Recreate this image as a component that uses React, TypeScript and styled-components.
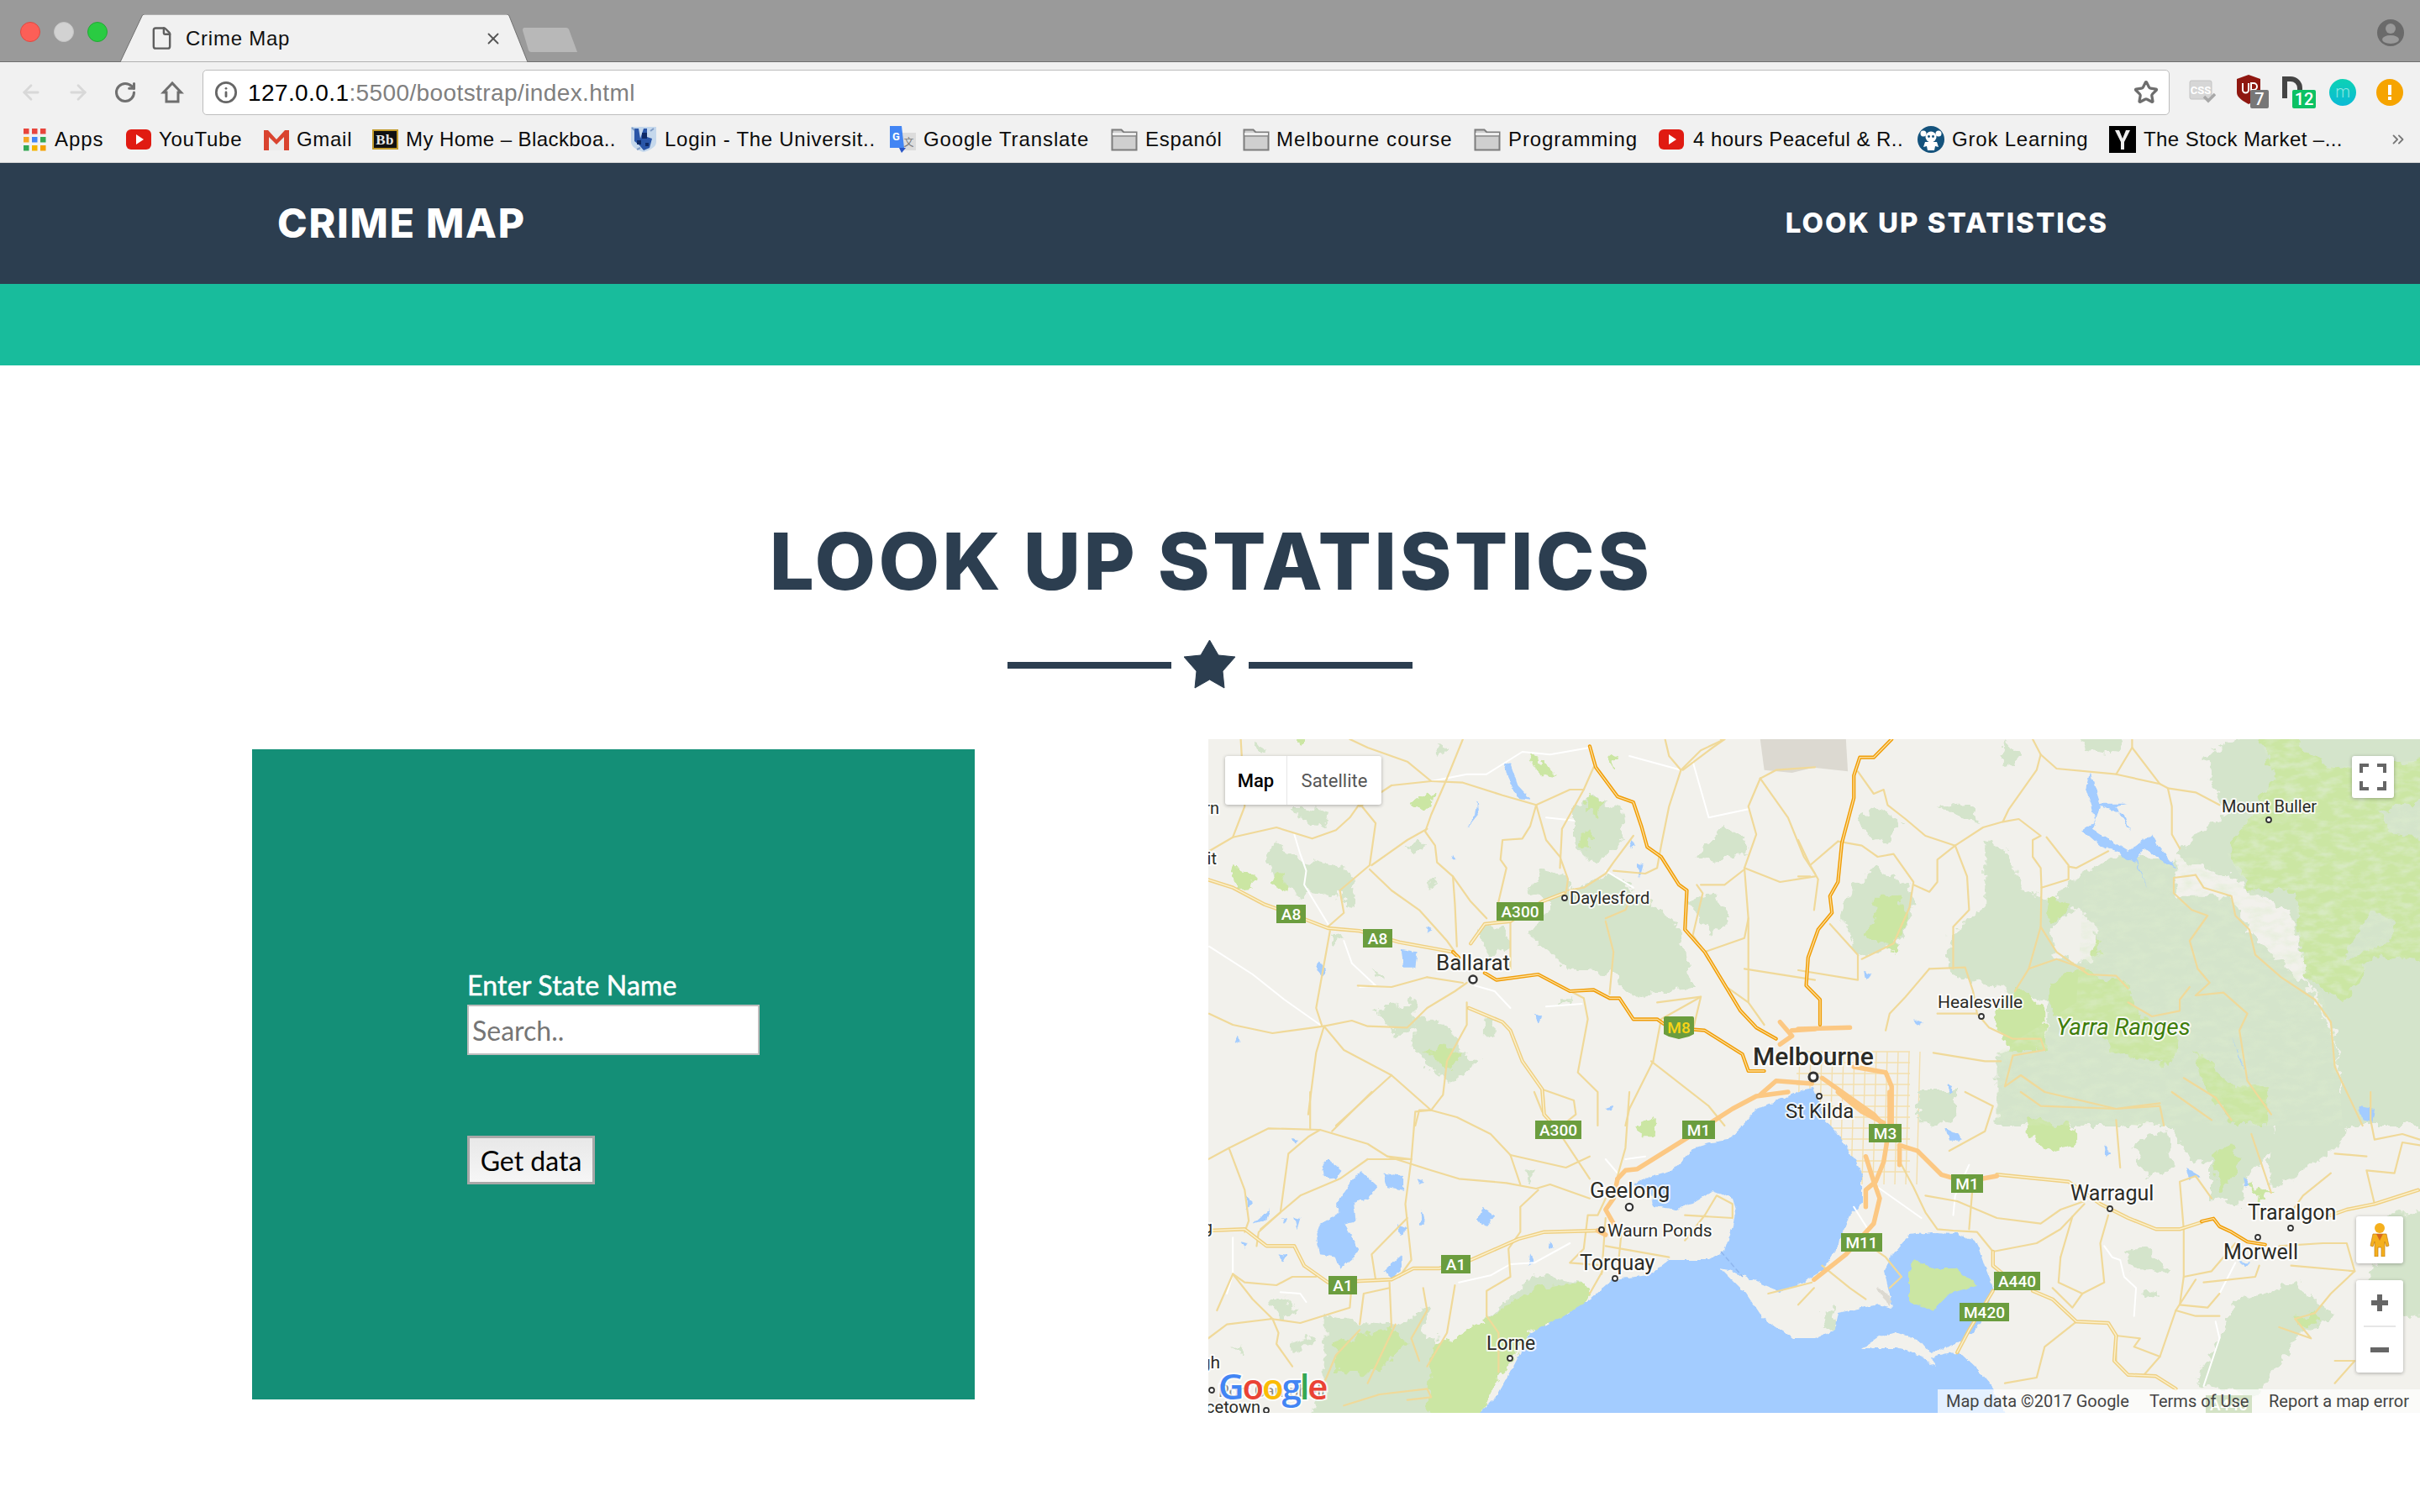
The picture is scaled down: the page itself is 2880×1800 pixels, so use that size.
import React from 'react';
import styled, { createGlobalStyle } from 'styled-components';
import { ArrowLeft, ArrowRight, RotateCw, Info, Star, File, X, ChevronsRight } from 'lucide-react';

const Global = createGlobalStyle`
  html, body { margin: 0; padding: 0; background: #fff; overflow: hidden; }
  #root { width: 2880px; height: 1800px; }
  * { box-sizing: border-box; }
`;

const Page = styled.div`width: 2880px; height: 1800px; display: flex; flex-direction: column; font-family: "Liberation Sans", Arial, sans-serif;`;

/* ---------- browser chrome ---------- */
const TabStrip = styled.div`height: 74px; background: #9a9a9a; border-bottom: 1px solid #6e6e6e; display: flex; padding-left: 24px; flex-shrink: 0;`;
const Light = styled.span<{ $c: string; $b: string }>`width: 24px; height: 24px; border-radius: 50%; background: ${p => p.$c}; border: 1px solid ${p => p.$b}; margin: 26px 16px 0 0; flex-shrink: 0;`;
const Tab = styled.div`position: relative; width: 485px; height: 57px; margin: 17px 0 -1px -1px; display: flex; align-items: center; padding: 0 30px 0 35px; flex-shrink: 0;`;
const TabShape = styled.svg`position: absolute; inset: 0;`;
const TabIcon = styled(File)`position: relative; color: #5f5f5f; flex-shrink: 0;`;
const TabTitle = styled.span`position: relative; font-size: 24px; letter-spacing: .75px; color: #111; margin-left: 14px; flex: 1;`;
const TabClose = styled(X)`position: relative; color: #555;`;
const NewTab = styled.svg`margin: 33px 0 0 -6px; flex-shrink: 0;`;
const Avatar = styled.svg`margin: 23px 18px 0 auto;`;

const Toolbar = styled.div`height: 66px; background: #f1f1f1; display: flex; align-items: flex-start; padding: 9px 0 0 23px; flex-shrink: 0;`;
const NavIcons = styled.div`display: flex; gap: 28px; height: 54px; align-items: center; flex-shrink: 0;`;
const Omnibox = styled.div`width: 2341px; height: 54px; margin-left: 22px; background: #fff; border: 1.5px solid #bdbdbd; border-radius: 5px; display: flex; align-items: center; padding: 0 12px 0 13px; flex-shrink: 0;`;
const Url = styled.div`flex: 1; margin: 2px 0 0 12px; font-size: 28px; letter-spacing: .4px; color: #000;`;
const UrlRest = styled.span`color: #808080;`;
const Extensions = styled.div`display: flex; margin-left: 23px; height: 54px; align-items: center;`;
const ExtSlot = styled.div<{ $w: number }>`width: ${p => p.$w}px; flex-shrink: 0; display: flex;`;

const BookmarkBar = styled.div`height: 54px; background: #f1f1f1; border-bottom: 1px solid #d4d4d4; display: flex; align-items: center; padding: 0 0 2px 27px; flex-shrink: 0;`;
const Bookmark = styled.div<{ $w: number; $ls: number }>`width: ${p => p.$w}px; display: flex; align-items: center; flex-shrink: 0; font-size: 24px; letter-spacing: ${p => p.$ls}px; color: #0b0b0b; white-space: nowrap;`;
const BookmarkIcon = styled.span<{ $w?: number }>`width: ${p => p.$w ?? 40}px; display: flex; flex-shrink: 0;`;
const More = styled(ChevronsRight)`color: #777; margin-left: -2px;`;

const Apps = () => (
  <svg width="28" height="28" viewBox="0 0 28 28">
    {[['#e8453c', '#e8453c', '#e8453c'], ['#f5a623', '#4285f4', '#34a853'], ['#34a853', '#f4b400', '#f4a000']].map((r, y) => r.map((c, x) => <rect key={`${x}${y}`} x={x * 10 + 1} y={y * 10 + 1} width="6.5" height="6.5" fill={c} />))}
  </svg>
);
const Yt = () => (
  <svg width="30" height="28" viewBox="0 0 30 28"><rect y="2" width="30" height="24" rx="6" fill="#e01b12" /><path d="M12 8l9 6-9 6z" fill="#fff" /></svg>
);
const Gmail = () => (
  <svg width="30" height="28" viewBox="0 0 30 28"><path d="M2 3h26v24H2z" fill="#ececec" /><path d="M2 3l13 12L28 3v5L15 19 2 8z" fill="#d0d0d0" /><path d="M0 3h5l10 11L25 3h5v24h-6V11l-9 9-9-9v16H0z" fill="#d9432f" /></svg>
);
const Bb = () => (
  <svg width="31" height="28" viewBox="0 0 31 28"><rect x="1" y="3" width="29" height="22" fill="#111" stroke="#c29b2b" strokeWidth="2" /><text x="15" y="20" fontSize="17" fontFamily="Liberation Serif" fontWeight="700" textAnchor="middle" fill="#e8e8e8">Bb</text></svg>
);
const Crest = () => (
  <svg width="32" height="32" viewBox="0 0 32 32">
    <path d="M1 1h30v18c0 6-8 10-15 12C9 29 1 25 1 19z" fill="#c5d8ec" />
    <path d="M5 3h5l2 12 4-12h4v10l6 2-3 11-7 3-5-6-6-5z" fill="#2a56a8" />
    <path d="M14 8h6v7h-6zM8 17h5v5H8zM18 20h4v4h-4z" fill="#0e2a66" />
    <path d="M2 2l3 3M28 3l-4 3M8 28l4-2" stroke="#7f9cc6" strokeWidth="2" />
  </svg>
);
const Translate = () => (
  <svg width="31" height="32" viewBox="0 0 31 32"><path d="M14 8h17v21H14z" fill="#dcdcdc" /><path d="M0 0h14l3 26H0z" fill="#4285f4" /><path d="M11 26h8l-5 6z" fill="#2a56c6" /><text x="8" y="17" fontSize="13" fontWeight="700" fontFamily="Roboto" textAnchor="middle" fill="#fff">G</text><text x="23" y="24" fontSize="12" fontFamily="Noto Sans CJK SC" textAnchor="middle" fill="#777">文</text></svg>
);
const Folder = () => (
  <svg width="32" height="28" viewBox="0 0 32 28"><path d="M1.5 5V2.5h11l3 3h15v21h-29z" fill="#cfcfcf" stroke="#7d7d7d" strokeWidth="2" /><path d="M2 7.5h28" stroke="#f5f5f5" strokeWidth="2.5" /><path d="M2 10h28" stroke="#8c8c8c" strokeWidth="1.5" /></svg>
);
const Grok = () => (
  <svg width="32" height="32" viewBox="0 0 32 32"><circle cx="16" cy="16" r="16" fill="#14527c" /><circle cx="16" cy="13" r="6.5" fill="#fff" /><circle cx="7" cy="9" r="3.5" fill="#fff" /><circle cx="25" cy="9" r="3.5" fill="#fff" /><path d="M9 19h14l2 6-4-1-1 5h-8l-1-5-4 1z" fill="#fff" /><circle cx="13.5" cy="12.5" r="1.4" fill="#14527c" /><circle cx="18.5" cy="12.5" r="1.4" fill="#14527c" /></svg>
);
const YIcon = () => (
  <svg width="32" height="32" viewBox="0 0 32 32"><rect width="32" height="32" fill="#000" /><path d="M7 5h5l4 10 4-10h5l-7 14v9h-4v-9z" fill="#eee" /></svg>
);
const Home = () => (
  <svg width="28" height="28" viewBox="0 0 28 28" fill="none"><path d="M14 3L3.5 14H7v11h14V14h3.5z" stroke="#6e6e6e" strokeWidth="3" strokeLinejoin="miter" /></svg>
);

const bookmarks: { label: string; w: number; ls: number; icon: React.ReactNode; iw?: number }[] = [
  { label: 'Apps', w: 123, ls: .9, icon: <Apps />, iw: 38 },
  { label: 'YouTube', w: 164, ls: .7, icon: <Yt />, iw: 39 },
  { label: 'Gmail', w: 129, ls: .7, icon: <Gmail />, iw: 39 },
  { label: 'My Home – Blackboa..', w: 307, ls: .42, icon: <Bb /> },
  { label: 'Login - The Universit..', w: 309, ls: .72, icon: <Crest />, iw: 41 },
  { label: 'Google Translate', w: 263, ls: .9, icon: <Translate /> },
  { label: 'Espanól', w: 157, ls: .7, icon: <Folder />, iw: 41 },
  { label: 'Melbourne course', w: 275, ls: 1.1, icon: <Folder /> },
  { label: 'Programming', w: 220, ls: .9, icon: <Folder />, iw: 41 },
  { label: '4 hours Peaceful & R..', w: 308, ls: .45, icon: <Yt />, iw: 41 },
  { label: 'Grok Learning', w: 228, ls: .8, icon: <Grok />, iw: 41 },
  { label: 'The Stock Market –...', w: 335, ls: .42, icon: <YIcon />, iw: 41 },
];

/* ---------- site ---------- */
const Navbar = styled.nav`height: 144px; background: #2c3e50; display: flex; align-items: center; justify-content: space-between; padding: 0 371px 2px 330px; flex-shrink: 0;`;
const Brand = styled.a`font-family: Inter, sans-serif; font-weight: 800; font-size: 48px; letter-spacing: 1.8px; color: #fff;`;
const NavLink = styled.a`font-family: Inter, sans-serif; font-weight: 800; font-size: 33px; letter-spacing: 2px; color: #fff;`;
const Band = styled.div`height: 97px; background: #18bc9c; flex-shrink: 0;`;
const Section = styled.section`flex: 1; display: flex; flex-direction: column; align-items: stretch;`;
const Heading = styled.h2`margin: 195px 0 0; height: 76px; line-height: 76px; font-family: Inter, sans-serif; font-weight: 800; font-size: 94px; letter-spacing: 3.25px; color: #2c3e50; text-align: center; white-space: nowrap; padding-left: 2px;`;
const Divider = styled.div`display: flex; align-items: center; justify-content: center; gap: 15px; margin-top: 55px; height: 62px;`;
const DividerLine = styled.span`width: 195px; height: 8px; background: #2c3e50;`;
const Columns = styled.div`display: flex; align-items: flex-start; padding-left: 300px; margin-top: 57px;`;
const Panel = styled.div`width: 860px; height: 774px; margin-top: 12px; background: #148f77; display: flex; flex-direction: column; align-items: flex-start; padding: 258px 0 0 256px; font-family: Lato, sans-serif;`;
const Label = styled.label`height: 46px; line-height: 46px; font-size: 32px; color: #fff; letter-spacing: .2px; -webkit-text-stroke: .5px #fff;`;
const SearchInput = styled.input`width: 348px; height: 60px; background: #fff; border: 2px solid #bdbdbd; padding: 0 4px; font-family: Lato, sans-serif; font-size: 32px; outline: none; &::placeholder { color: #757575; opacity: 1; }`;
const GetData = styled.button`width: 152px; height: 58px; margin-top: 96px; border: 3px solid #a8a8a8; background: linear-gradient(#e8e8e8, #f6f6f6); font-family: Lato, sans-serif; font-size: 32px; color: #000; padding: 0;`;

/* ---------- map ---------- */
const MapBox = styled.div`position: relative; width: 1442px; height: 802px; margin-left: 278px; overflow: hidden; background: #f2f1ec; font-family: Roboto, sans-serif;`;
const MapDrawing = styled.svg`display: block;`;
const MapText = styled.text<{ $s: number; $w?: number; $c?: string; $i?: boolean }>`
  font-family: Roboto, sans-serif; font-size: ${p => p.$s}px; font-weight: ${p => p.$w ?? 400}; fill: ${p => p.$c ?? '#2b2b26'};
  font-style: ${p => (p.$i ? 'italic' : 'normal')}; stroke: rgba(255,255,255,.82); stroke-width: 4px; paint-order: stroke; stroke-linejoin: round;
`;
const ShieldText = styled.text<{ $c?: string }>`font-family: Roboto, sans-serif; font-size: 19px; font-weight: 500; fill: ${p => p.$c ?? '#fff'}; text-anchor: middle;`;
const GoogleMark = styled.text`font-family: "Open Sans", sans-serif; font-size: 42px; font-weight: 600; stroke: rgba(255,255,255,.75); stroke-width: 4px; paint-order: stroke; letter-spacing: -2.1px;`;

const MapType = styled.div`position: absolute; left: 20px; top: 20px; width: 186px; height: 58px; background: #fff; border-radius: 3px; box-shadow: 0 1px 4px rgba(0,0,0,.3); display: flex; align-items: center;`;
const TypeBtn = styled.div<{ $on?: boolean; $w: number }>`width: ${p => p.$w}px; height: 100%; display: flex; align-items: center; justify-content: center; font-size: 22px; font-weight: ${p => (p.$on ? 500 : 400)}; color: ${p => (p.$on ? '#000' : '#565656')}; & + & { border-left: 1px solid #e6e6e6; }`;
const MapButton = styled.div<{ $t: number; $l: number; $w: number; $h: number }>`position: absolute; top: ${p => p.$t}px; left: ${p => p.$l}px; width: ${p => p.$w}px; height: ${p => p.$h}px; background: #fff; border-radius: 3px; box-shadow: 0 1px 4px rgba(0,0,0,.3); display: flex; flex-direction: column; align-items: center; justify-content: center;`;
const ZoomCell = styled.div`flex: 1; width: 100%; display: flex; align-items: center; justify-content: center;`;
const ZoomRule = styled.div`width: 38px; height: 2px; background: #e6e6e6;`;
const Attribution = styled.div`position: absolute; right: 0; bottom: 0; width: 574px; height: 28px; background: rgba(255,255,255,.7); display: flex; align-items: center; padding-left: 10px; font-size: 20px; color: #444; white-space: nowrap;`;
const AttrItem = styled.span<{ $w: number }>`width: ${p => p.$w}px;`;

const T: Record<string, number[]> = { A: [2.119, -18, 3, -20], B: [2.114, 702, 3, -20], C: [2.119, -18, 3, 420], D: [2.114, 702, 3, 420] };
const P = (r: string, s: string) => {
  const [sx, ox, sy, oy] = T[r];
  return s.split(' ').map(a => { const [x, y] = a.split(',').map(Number); return `${(x / sx + ox).toFixed(1)},${(y / sy + oy).toFixed(1)}`; }).join(' ');
};

const forest: [string, string][] = [
  ['B', '1020,120 1150,30 1620,30 1620,1440 1380,1440 1350,1100 1270,900 1250,700 1100,560 950,480 1000,400 1080,330 1040,200'],
  ['B', '720,540 800,470 950,490 950,620 1090,620 1140,760 1280,940 1350,1130 1370,1440 500,1440 500,1180 620,1130 630,1000 380,900 380,760 470,660 470,420 540,480 560,600 640,640 680,580'],
  ['B', '140,580 200,520 290,600 280,700 250,800 160,840 110,690'],
  ['B', '150,340 200,305 260,360 220,430 170,400'],
  ['B', '520,60 560,130 510,150'], ['B', '700,30 820,30 800,110 730,100'], ['B', '350,300 430,290 460,360 400,330'], ['B', '390,760 470,740 520,880 400,880'],
  ['A', '180,470 210,430 270,490 400,520 400,590 350,620 300,600 280,630 210,560'],
  ['A', '850,600 880,520 945,550 945,610 1050,540 1220,720 1240,800 1255,950 1100,980 1060,900 950,880 880,800 850,760 900,650'],
  ['A', '1180,900 1230,810 1260,950 1180,960'],
  ['A', '460,1030 560,990 560,1090 510,1120'], ['A', '560,1050 640,1080 680,1180 720,1210 650,1290 590,1230 560,1150'],
  ['A', '960,310 1000,260 1080,310 1090,420 1010,510 960,430'], ['A', '1270,480 1340,360 1400,440 1390,470 1300,500'],
  ['A', '240,300 280,300 350,320 340,360 300,370'], ['A', '1250,640 1310,610 1360,700 1310,760'], ['A', '710,740 780,720 800,800 750,830'],
  ['A', '540,450 560,410 585,440 550,465'], ['A', '375,600 410,590 405,660 385,650'], ['A', '595,560 610,555 605,595 592,595'], ['A', '150,80 180,90 170,120'],
  ['A', '445,890 480,900 480,920'], ['A', '350,750 380,770 350,790'], ['A', '915,985 960,985 925,1010'], ['A', '735,1060 760,1070 760,1120 735,1120'], ['A', '610,75 640,90 620,120'],
  ['C', '740,810 860,650 970,680 980,770 880,780 820,850'],
  ['C', '330,800 400,820 520,830 590,770 580,880 620,870 600,1190 290,1190 330,1030'],
  ['C', '190,750 230,740 265,780 220,815'], ['C', '240,900 300,870 310,880 250,930'], ['C', '100,910 130,915 125,945'], ['C', '835,270 865,285 850,320'],
  ['D', '500,50 600,0 1140,0 1180,60 1200,200 1130,300 1120,400 1040,380 1040,250 990,250 940,120 900,0'],
  ['D', '1230,0 1410,0 1430,50 1350,200 1250,300 1190,340 1180,180'],
  ['D', '1000,1040 1060,880 1100,750 1250,680 1350,800 1260,870 1200,1000 1150,1080'],
  ['D', '820,570 880,560 930,640 840,640'], ['D', '1430,680 1500,430 1620,430 1620,800 1430,800'], ['D', '840,200 920,130 940,270 880,300'],
  ['D', '860,720 900,710 900,740'], ['D', '300,0 400,0 400,90 330,130 300,90'], ['D', '60,780 90,770 100,840 70,850'], ['D', '280,510 305,500 300,540'],
];
const park: [string, string][] = [
  ['B', '1155,30 1250,30 1270,100 1350,160 1620,130 1620,860 1450,830 1370,1000 1270,900 1250,600 1130,590 1080,470 1150,300 1200,200'],
  ['B', '625,625 680,640 670,690 630,720'],
  ['B', '630,930 720,880 770,920 800,905 830,950 860,1040 960,1130 940,1230 780,1170 770,1100 640,1040'],
  ['B', '490,1040 550,930 620,1040 620,1170 530,1170'],
  ['B', '1000,1170 1100,1300 1180,1300 1180,1440 1100,1440 1010,1280'],
  ['B', '200,620 260,620 270,720 240,815 170,770'], ['B', '700,790 745,740 760,830 720,830'],
  ['A', '100,520 150,535 145,600 105,605'], ['A', '590,1180 630,1150 680,1180 650,1240'], ['A', '970,420 1000,370 1000,470'], ['A', '990,260 1030,280 1020,330 990,320'],
  ['A', '550,280 605,250 600,305 575,305'], ['A', '190,560 225,530 235,610'], ['A', '250,40 300,40 270,90'], ['A', '845,120 880,130 915,195 880,190'], ['A', '1045,110 1070,120 1060,180'],
  ['C', '590,1190 600,920 720,830 860,700 980,680 1010,730 950,800 850,860 780,1000 710,1190'],
  ['C', '360,900 500,840 540,900 460,1000 360,1000'], ['C', '1115,120 1165,98 1165,160 1130,160'],
  ['D', '575,90 700,130 700,190 640,210 580,160'], ['D', '1040,230 1080,180 1120,240 1060,360'], ['D', '1240,810 1300,795 1310,825 1280,840'], ['D', '1130,330 1190,360 1160,400'],
];
const lakes: [string, string][] = [
  ['C', '320,470 370,430 360,400 420,280 465,340 440,380 405,395 410,460 380,470 420,570 370,630 360,590 320,580 310,510'],
  ['C', '325,260 340,240 375,280 360,310 330,300'], ['C', '480,290 530,300 530,350 490,340'], ['C', '730,410 760,440 740,480 715,460'],
  ['C', '480,640 525,580 525,640 500,665'], ['C', '150,470 195,415 185,455'], ['C', '565,310 585,320 570,330'], ['C', '575,420 585,470 572,470'],
  ['C', '515,475 540,490 520,510'], ['C', '850,580 860,610 845,620'], ['C', '900,530 910,560 895,555'], ['C', '135,370 150,390 135,420'], ['C', '255,445 270,450 262,490'], ['C', '215,580 235,585 225,610'], ['C', '120,535 138,540 130,560'],
  ['C', '225,450 238,455 230,470'], ['C', '250,165 265,170 255,185'], ['C', '1040,60 1060,50 1050,70'],
  ['A', '525,810 565,820 560,875 530,875'], ['A', '785,140 800,150 820,230 850,275 820,270 790,180'], ['A', '715,280 720,330 690,380 710,330'], ['A', '590,730 605,740 590,755'],
  ['A', '315,850 335,880 325,905 310,880'], ['A', '110,1125 122,1135 105,1145'], ['A', '655,470 662,490 652,490'], ['A', '860,1040 878,1050 870,1075'], ['A', '1105,420 1115,440 1098,450'], ['A', '1120,500 1135,510 1125,560'],
  ['B', '735,180 760,290 830,290 800,300 835,390 820,330 760,300 740,380 830,460 890,400 910,450 950,520 910,490 870,450 850,490 880,600 850,500 820,490 810,465 760,440 715,385 750,350 725,240'],
  ['B', '1090,1120 1140,1300 1110,1200'], ['B', '1410,1380 1445,1390 1445,1430 1420,1420'], ['B', '165,890 185,900 170,925'], ['B', '290,1060 315,1070 300,1085'], ['B', '375,1290 390,1300 380,1330'],
  ['D', '370,130 400,150 410,170 380,170'], ['D', '770,190 785,220 775,230'], ['D', '975,270 1010,300 985,315'], ['D', '1120,300 1135,330 1125,340'], ['D', '1410,50 1450,60 1445,105 1420,100'], ['D', '1110,610 1135,610 1125,625'],
];
const minor: [string, string][] = [
  ['A', '395,60 440,90 540,140 600,210 680,215 780,260 865,295 950,240 985,240 1010,160'], ['A', '680,60 640,200 600,330 585,390 610,440 615,500 655,550 700,640 740,700'],
  ['A', '655,550 660,650 665,800'], ['A', '500,225 600,210'], ['A', '420,300 500,225'], ['A', '120,60 130,300 100,410 40,460'],
  ['A', '100,410 210,375 300,415 360,385 395,340 420,290 460,360 445,510 370,600 380,680 340,730'], ['A', '445,525 500,600 570,670 640,780 660,820'], ['A', '590,380 540,420 450,510'],
  ['A', '865,295 850,370 830,415 780,420 775,490 790,520 770,640'], ['A', '865,295 890,420 925,480 945,560 940,610'], ['A', '985,240 930,380 925,520'], ['A', '1110,405 1060,500 1040,540 985,590 945,600'],
  ['A', '1190,60 1200,120 1230,170 1280,100 1340,60'], ['A', '1230,170 1200,300 1180,440 1170,520 1140,540 1060,530'], ['A', '1430,200 1400,300 1420,400 1390,520 1400,700 1400,1000'],
  ['A', '1430,200 1500,340 1540,480 1568,540'], ['A', '1390,520 1480,570 1568,550'], ['A', '1280,580 1340,580 1390,525'], ['A', '1170,1000 1280,980 1260,1100'],
  ['A', '40,1040 100,1080 200,1110 330,1085 400,1065 440,1085 540,1090 590,1020 660,960 690,930'], ['A', '330,1085 380,1170 500,1260 600,1385 570,1385 560,1440'], ['A', '500,1260 360,1440'],
  ['A', '330,1085 310,1180 290,1400'], ['A', '345,745 310,1020 325,1085'], ['A', '590,910 500,945 415,940'], ['A', '590,910 680,930'], ['A', '690,1000 690,1080 640,1210 630,1330 600,1385'],
  ['A', '880,1310 960,1350 965,1400 930,1440'], ['A', '800,710 800,880'], ['A', '870,900 985,985 995,1060 970,1250 1020,1320 1020,1440'], ['A', '1040,710 1060,820 1050,970'], ['A', '1040,700 1090,670 1100,640'],
  ['A', '1160,1210 1180,1060 1280,980'], ['A', '1155,1210 1300,1370 1340,1440'], ['A', '1160,1210 1100,1380 1090,1440'], ['A', '1290,820 1390,770 1400,700'], ['A', '1270,580 1285,610 1260,760 1290,820'],
  ['A', '1330,60 1340,60 1310,90 1235,170'], ['A', '1430,200 1470,170 1568,160'], ['A', '1440,1080 1400,1000 1350,950'], ['A', '1390,880 1568,920'],
  ['B', '590,60 610,115 650,165 800,185 910,220 840,90'], ['B', '840,60 840,90 800,185'], ['B', '910,220 930,235 1000,250 1060,295'], ['B', '930,235 940,300 940,400 960,450'],
  ['B', '610,115 600,170 530,310 515,355 465,375 395,440 320,405 270,345 225,295 215,240 190,255 150,175'], ['B', '395,440 425,550 430,670 390,730 390,880'], ['B', '395,440 350,490 350,570 330,605 290,580'],
  ['B', '515,355 555,345 610,405 590,420 590,480 610,520 612,590 680,560 680,510 625,410'], ['B', '680,515 700,520 780,460'], ['B', '612,590 610,730 650,820 730,900 800,905 830,950'],
  ['B', '100,425 160,440 200,480 240,470 290,570 280,660 240,790 160,845'], ['B', '100,425 30,510 50,560 40,670'], ['B', '30,510 0,420'], ['B', '0,550 30,550'],
  ['B', '1000,545 945,555 945,610 990,670 1030,690 985,780 1005,880 1035,930 1000,975 1070,965 1130,1040 1110,1100 1130,1280 1190,1400'], ['B', '985,945 960,990 960,1030 890,1050 830,1000'],
  ['B', '1000,545 1020,590 1090,620 1100,690 1135,740 1150,830 1215,910 1300,990 1340,1070 1350,1230 1380,1320 1420,1440'], ['B', '580,880 650,845 720,880'], ['B', '610,730 580,880 545,960'],
  ['B', '330,880 420,875 440,960 450,1040'], ['B', '330,880 270,980 230,1040 220,1100'], ['B', '350,1040 450,1040 480,1090 540,1130 610,1130 620,1170 540,1190 520,1300 560,1260 620,1320 800,1380 910,1370 920,1440'],
  ['B', '970,1270 1050,1340 1090,1420'], ['B', '340,1180 470,1210 510,1210'], ['B', '80,720 150,830 150,920 0,885'],
  ['C', '38,240 90,200 190,130 320,135 440,185 490,230 600,280 670,310 790,325 865,345 900,330 1000,380'], ['C', '490,230 550,240 535,400 550,600 520,660'], ['C', '320,135 290,160 240,220 220,430 165,500 160,550'],
  ['C', '350,140 450,0'], ['C', '295,0 295,130'], ['C', '90,200 130,350 140,460 130,500'], ['C', '550,240 560,70 600,65 665,90 750,150 800,225 825,330'], ['C', '800,225 940,270 1000,230'],
  ['C', '870,350 825,410 825,500 795,560 800,660 740,710 740,800 770,860 770,1000'], ['C', '540,450 450,580 460,670'], ['C', '440,240 500,240 550,240'], ['C', '440,240 370,310 270,370 170,490'],
  ['C', '100,650 60,780'], ['C', '100,650 130,680 210,690 250,660 310,660'], ['C', '100,650 150,740 200,810 215,860 210,900 250,980'], ['C', '195,810 270,825 350,790 395,770 400,680'], ['C', '200,810 85,830 38,880'],
  ['C', '420,830 430,720 495,700'], ['C', '495,680 500,840'], ['C', '580,700 590,780 550,880 570,960'], ['C', '420,850 360,940 330,1040'], ['C', '510,830 440,1040'], ['C', '660,690 640,860 590,980'],
  ['C', '1040,380 1020,440 995,440 985,560 950,610 1040,620 1000,720'], ['C', '1040,450 1030,650'], ['C', '1080,500 1070,640'], ['C', '930,160 1000,310'], ['C', '860,0 880,70 930,160'], ['C', '1100,0 1090,200 1070,300'],
  ['C', '1240,530 1290,440 1320,370 1360,400 1360,450 1240,440'], ['C', '1040,550 1200,590'], ['C', '1450,720 1560,680'], ['C', '540,1100 600,1090 590,1060 470,1080 380,1120'],
  ['D', '260,260 290,340 320,430 350,490 390,495 450,500 490,570'], ['D', '490,570 600,540 660,490 690,445 720,400'], ['D', '660,590 690,445'], ['D', '660,590 655,680 715,720 690,770 640,700'], ['D', '715,720 770,680 760,540 780,440'],
  ['D', '700,820 620,910 600,1020 520,1040'], ['D', '800,870 860,880 845,910 910,945 950,780 1000,800 1060,800'], ['D', '910,945 870,1010'], ['D', '320,370 400,390 500,450 610,470 660,420 720,390'], ['D', '440,320 430,490'],
  ['D', '800,100 810,270'], ['D', '1140,150 1190,360'], ['D', '1040,380 1000,300 960,320 970,490'], ['D', '970,490 970,660 1040,640 1100,540'], ['D', '970,660 960,760 1030,770 1060,720'], ['D', '1000,670 950,780'],
  ['D', '1160,620 1150,660 1020,680'], ['D', '1240,620 1400,640 1380,540 1320,540 1210,550'], ['D', '1400,640 1340,720 1300,790 1250,810 1290,880 1210,840'], ['D', '1450,400 1430,280 1500,290 1520,180 1564,190'],
  ['D', '1350,220 1430,230'], ['D', '1340,290 1270,370 1240,430'], ['D', '1440,0 1440,100 1450,170 1520,150 1564,170'], ['D', '1350,960 1400,960 1350,1040'], ['D', '1430,880 1520,960'], ['D', '800,960 800,870'],
  ['D', '420,0 490,50 470,140 380,210'], ['D', '560,0 610,50 800,60 910,40'], ['D', '1040,100 940,0'], ['D', '160,530 220,590 260,660 230,700'], ['D', '60,620 130,700 170,740'], ['D', '40,700 0,760'],
];
const doubleRoads: [string, string][] = [
  ['A', '38,562 100,590 180,650 240,680 340,735 420,745 520,785 655,820'], ['A', '695,1020 780,1070 800,1100 830,1210 880,1310 885,1400 910,1440'], ['A', '700,790 735,720 800,710 880,640 935,610'],
  ['C', '38,495 130,490 185,550 255,550 280,620 340,680 500,670 555,630 620,630 700,600 820,525 885,500 1020,495'],
  ['D', '500,295 680,320 760,400 830,450 900,490 960,490 1015,465'], ['D', '490,710 430,850 400,930'], ['D', '590,710 640,740 700,820 780,825 800,870 795,960 830,1010 900,1015 950,1060'], ['D', '490,570 490,620 550,690'], ['D', '1560,350 1450,400 1380,420 1340,440'],
];
const arterial: [string, string][] = [
  ['D', '230,0 230,120 215,250 195,320 170,350 170,410'], ['D', '170,230 190,320 205,380 190,470 120,580 40,670'], ['D', '255,190 300,210 360,295 420,320 500,300'], ['D', '255,190 255,260'], ['D', '100,0 160,70 215,110'],
  ['B', '0,1095 130,1090'], ['B', '140,1230 220,1250 235,1300 235,1440'], ['B', '60,1270 130,1340 190,1400 215,1440'],
  ['C', '1070,310 1090,280 1120,275 1250,160 1360,60 1420,15 1500,0'], ['C', '1070,310 1060,380 1040,420 1060,470'], ['C', '1020,495 1040,510'],
  ['A', '1430,1330 1470,1280 1560,1290'], ['A', '1480,1070 1510,1120 1480,1150'], ['A', '1510,1100 1568,1095'],
];
const freeway: [string, string][] = [
  ['A', '1000,85 1015,160 1070,265 1110,285 1130,370 1145,445 1180,480 1225,580 1245,600 1240,740 1290,820 1380,1030 1420,1090 1470,1130'],
  ['A', '655,820 670,840'], ['A', '735,895 765,920 870,900 950,960 1010,955 1050,985 1075,985 1110,1060 1170,1060 1200,1090 1290,1100 1385,1185 1400,1245 1440,1245'],
  ['B', '235,60 190,125 155,125 140,190 140,270 110,430 100,570 80,620 85,680 50,740 25,840 20,940 55,990 55,1080'],
  ['D', '1015,462 1045,452 1060,480 1090,500 1130,535 1175,545'],
];
const rail: [string, string][] = [
  ['A', '600,210 690,185 740,185 830,105 900,115 1000,90'], ['A', '1100,120 1230,170'], ['A', '255,400 270,470 285,530 280,580 340,720'], ['A', '40,800 150,900 230,990 320,1080'], ['A', '380,780 400,860 460,940 420,945'],
  ['A', '710,940 760,960 800,1020'], ['A', '890,1015 980,1005'], ['A', '890,340 960,350'], ['A', '1260,140 1300,340 1400,310'], ['A', '1040,530 1110,590'],
  ['C', '670,680 750,655 800,615 860,610 950,540'], ['C', '220,715 270,720 285,750'], ['C', '1040,240 1070,290'], ['C', '1090,240 1140,230'], ['C', '100,520 100,650 85,720'],
  ['D', '770,550 790,590 810,600 820,660 850,700 845,800'], ['D', '1050,820 1060,880 1020,1050'], ['D', '390,440 395,370 430,260'], ['D', '140,410 180,500'], ['D', '200,340 310,450'], ['D', '1100,610 1060,720'],
];
const shields: { x: number; y: number; w: number; t: string }[] = [
  { x: 81, y: 197, w: 35, t: 'A8' }, { x: 184, y: 226, w: 35, t: 'A8' }, { x: 343, y: 194, w: 56, t: 'A300' }, { x: 389, y: 454, w: 55, t: 'A300' }, { x: 564, y: 454, w: 39, t: 'M1' },
  { x: 277, y: 614, w: 35, t: 'A1' }, { x: 143, y: 639, w: 34, t: 'A1' }, { x: 786, y: 458, w: 39, t: 'M3' }, { x: 884, y: 518, w: 38, t: 'M1' }, { x: 753, y: 588, w: 49, t: 'M11' },
  { x: 935, y: 634, w: 55, t: 'A440' }, { x: 894, y: 671, w: 59, t: 'M420' }, { x: 1187, y: 781, w: 55, t: 'A440' },
];
const labels: { t: string; x: number; y: number; s: number; w?: number; anchor?: 'end' }[] = [
  { t: 'Ballarat', x: 271, y: 275, s: 26 }, { t: 'Daylesford', x: 430, y: 196, s: 20 }, { t: 'Melbourne', x: 648, y: 388, s: 30, w: 500 }, { t: 'St Kilda', x: 687, y: 451, s: 24 },
  { t: 'Healesville', x: 868, y: 320, s: 21 }, { t: 'Mount Buller', x: 1206, y: 87, s: 20 }, { t: 'Geelong', x: 454, y: 546, s: 26 }, { t: 'Waurn Ponds', x: 475, y: 592, s: 21 },
  { t: 'Torquay', x: 442, y: 632, s: 25 }, { t: 'Lorne', x: 331, y: 727, s: 23 }, { t: 'Warragul', x: 1026, y: 549, s: 25 }, { t: 'Traralgon', x: 1237, y: 572, s: 25 }, { t: 'Morwell', x: 1208, y: 619, s: 25 },
  { t: 'rn', x: 13, y: 89, s: 20, anchor: 'end' }, { t: 'it', x: 10, y: 149, s: 20, anchor: 'end' }, { t: 'g', x: 5, y: 588, s: 20, anchor: 'end' }, { t: 'gh', x: 14, y: 749, s: 21, anchor: 'end' }, { t: 'cetown', x: 62, y: 802, s: 20, anchor: 'end' },
];
const dots: [number, number, number, number][] = [
  [315, 286, 4.5, 2.5], [424, 189, 3, 1.8], [720, 402, 5, 3.2], [727, 425, 3, 1.8], [920, 330, 3, 1.8], [1262, 96, 3, 1.8], [501, 557, 4.2, 2.2], [468, 584, 3, 1.8], [484, 642, 3, 1.8],
  [359, 737, 3, 1.8], [1073, 559, 3, 1.8], [1288, 582, 3, 1.8], [1249, 593, 3, 1.8], [69, 799, 3, 1.8], [4, 775, 3, 1.8],
];
const grid = { xs: Array.from({ length: 12 }, (_, i) => 694 + i * 13), ys: Array.from({ length: 12 }, (_, i) => 372 + i * 13) };

const MapView = () => (
  <MapBox>
    <MapDrawing width="1442" height="802" viewBox="0 0 1442 802">
      <defs>
        <filter id="rough" filterUnits="userSpaceOnUse" x="0" y="0" width="1442" height="802">
          <feTurbulence type="fractalNoise" baseFrequency=".08" numOctaves="3" seed="4" />
          <feDisplacementMap in="SourceGraphic" scale="18" xChannelSelector="R" yChannelSelector="G" />
        </filter>
        <filter id="coast" filterUnits="userSpaceOnUse" x="0" y="0" width="1442" height="802">
          <feTurbulence type="fractalNoise" baseFrequency=".12" numOctaves="2" seed="7" />
          <feDisplacementMap in="SourceGraphic" scale="6" xChannelSelector="R" yChannelSelector="G" />
        </filter>
        <filter id="mottle" filterUnits="userSpaceOnUse" x="0" y="0" width="1442" height="802">
          <feTurbulence type="fractalNoise" baseFrequency=".05 .11" numOctaves="3" seed="9" result="n" />
          <feColorMatrix in="n" type="matrix" values="0 0 0 0 .72  0 0 0 0 .84  0 0 0 0 .62  2.4 0 0 0 -.95" result="c" />
          <feComposite in="c" in2="SourceAlpha" operator="in" />
        </filter>
      </defs>
      <rect width="1442" height="802" fill="#f2f1ec" />
      <polygon points={P('A', '1430,60 1568,60 1568,160 1510,180 1440,170')} fill="#dcd9d1" />
      <polygon points={P('B', '0,60 120,60 125,175 0,155')} fill="#dcd9d1" />
      <g stroke="#f3dfae" strokeWidth="1.4" fill="none">
        {grid.xs.map(x => <line key={x} x1={x + 10} y1="372" x2={x + 6} y2="530" />)}
        {grid.ys.map(y => <line key={y} x1="700" y1={y} x2="835" y2={y} />)}
      </g>
      <g filter="url(#rough)">
        {forest.map(([r, s], i) => <polygon key={i} points={P(r, s)} fill="#d4e4cb" />)}
        {park.map(([r, s], i) => <polygon key={i} points={P(r, s)} fill="#cbe6a3" />)}
        <polygon points={P('B', '640,740 700,650 750,740 740,860 650,840')} fill="#f0f0ea" />
        <polygon points={P('B', '1460,320 1620,260 1620,420 1500,400')} fill="#d4e4cb" />
        <polygon points={P('B', '1370,850 1440,680 1500,700 1490,780')} fill="#d4e4cb" />
      </g>
      <polygon points={P('B', '1155,30 1250,30 1270,100 1350,160 1620,130 1620,860 1450,830 1370,1000 1270,900 1250,600 1130,590 1080,470 1150,300 1200,200')} filter="url(#mottle)" opacity=".7" />
      <polygon points={P('B', '720,540 1000,480 1250,700 1350,1100 1370,1440 500,1440 500,1180 700,1000')} filter="url(#mottle)" opacity=".5" />
      <g filter="url(#coast)">
        <polygon points="310,815 345,780 360,753 383,707 416,690 454,667 482,643 525,638 548,620 595,620 614,610 624,580 628,560 624,547 600,538 581,550 558,560 530,556 525,540 506,530 520,522 553,513 577,487 600,480 619,477 640,455 652,440 672,432 690,425 705,418 720,415 730,440 735,455 749,470 770,500 778,520 778,553 763,567 749,603 730,633 702,650 680,658 660,650 640,640 620,632 610,630 640,660 660,690 695,713 722,713 745,703 749,683 797,673 815,677 804,633 815,613 834,590 862,587 891,588 915,600 924,627 934,653 924,687 910,707 889,720 868,728 896,732 915,750 934,773 955,815" fill="#a3ccff" />
        <polygon points="778,725 797,712 818,706 846,716 858,730 870,728 885,730 860,735 866,748 850,735 820,725" fill="#f2f1ec" />
        <polygon points="839,620 863,630 891,630 915,650 882,660 863,680 834,670 834,633" fill="#cbe6a3" />
        <polygon points="795,653 802,655 815,670 812,675 802,665" fill="#dcd9d1" />
        {lakes.map(([r, s], i) => <polygon key={i} points={P(r, s)} fill="#a3ccff" />)}
      </g>
      <g fill="none" strokeLinejoin="round" strokeLinecap="round">
        {rail.map(([r, s], i) => <polyline key={i} points={P(r, s)} stroke="#fff" strokeWidth="2" />)}
        {minor.map(([r, s], i) => <polyline key={i} points={P(r, s)} stroke="#f0d999" strokeWidth="2.2" />)}
        {doubleRoads.map(([r, s], i) => <polyline key={i} points={P(r, s)} stroke="#efd083" strokeWidth="4.4" />)}
        {doubleRoads.map(([r, s], i) => <polyline key={i} points={P(r, s)} stroke="#fbf0cc" strokeWidth="1.5" />)}
        {arterial.map(([r, s], i) => <polyline key={i} points={P(r, s)} stroke="#fcc883" strokeWidth="5.5" />)}
        {freeway.map(([r, s], i) => <polyline key={i} points={P(r, s)} stroke="#f09d07" strokeWidth="4.2" />)}
        {freeway.map(([r, s], i) => <polyline key={i} points={P(r, s)} stroke="#fde0a0" strokeWidth="1.3" />)}
      </g>
      <line x1="610" y1="610" x2="636" y2="640" stroke="#8fb6ee" strokeWidth="1.5" strokeDasharray="6 3" />
      {shields.map(s => (
        <g key={`${s.t}${s.x}`}>
          <rect x={s.x} y={s.y} width={s.w} height={22} fill="#6b9d3e" />
          <ShieldText x={s.x + s.w / 2} y={s.y + 18}>{s.t}</ShieldText>
        </g>
      ))}
      <path d="M542 332a2 2 0 0 1 2-2h32a2 2 0 0 1 2 2v19l-6 3-12 3-12-3-6-3z" fill="#6b9d3e" />
      <ShieldText $c="#f8d416" x="560" y="350">M8</ShieldText>
      {dots.map(([x, y, r, w], i) => <circle key={i} cx={x} cy={y} r={r} fill="#fff" stroke="#333" strokeWidth={w} />)}
      {labels.map(l => <MapText key={l.t} x={l.x} y={l.y} $s={l.s} $w={l.w} textAnchor={l.anchor}>{l.t}</MapText>)}
      <MapText x="1009" y="352" $s="28" $c="#3e7d0b" $i>Yarra Ranges</MapText>
      <MapText x="12" y="783" $s="20" $c="#8b8b86">Port Campbell</MapText>
      <GoogleMark x="12" y="786">
        <tspan fill="#4285f4">G</tspan><tspan fill="#ea4335">o</tspan><tspan fill="#fbbc05">o</tspan><tspan fill="#4285f4">g</tspan><tspan fill="#34a853">l</tspan><tspan fill="#ea4335">e</tspan>
      </GoogleMark>
    </MapDrawing>
    <MapType>
      <TypeBtn $on $w={73}>Map</TypeBtn>
      <TypeBtn $w={113}>Satellite</TypeBtn>
    </MapType>
    <MapButton $t={20} $l={1361} $w={50} $h={50}>
      <svg width="32" height="32" viewBox="0 0 32 32" fill="none" stroke="#666" strokeWidth="4"><path d="M2 11V2h9M21 2h9v9M30 21v9h-9M11 30H2v-9" /></svg>
    </MapButton>
    <MapButton $t={568} $l={1366} $w={56} $h={56}>
      <svg width="24" height="40" viewBox="0 0 24 40"><circle cx="12" cy="6" r="6" fill="#f5b01d" /><path d="M4 13h16l3 14-3 1-2-6v18h-4V29h-4v11H6V22l-2 6-3-1z" fill="#f5b01d" stroke="#c17d12" strokeWidth=".7" /><path d="M8 13h8l-4 8z" fill="#d7671e" /></svg>
    </MapButton>
    <MapButton $t={644} $l={1366} $w={56} $h={110}>
      <ZoomCell><svg width="22" height="22" viewBox="0 0 22 22"><path d="M8 1h6v7h7v6h-7v7H8v-7H1V8h7z" fill="#666" /></svg></ZoomCell>
      <ZoomRule />
      <ZoomCell><svg width="22" height="22" viewBox="0 0 22 22"><path d="M0 8h22v6H0z" fill="#666" /></svg></ZoomCell>
    </MapButton>
    <Attribution>
      <AttrItem $w={242}>Map data ©2017 Google</AttrItem>
      <AttrItem $w={142}>Terms of Use</AttrItem>
      <AttrItem $w={170}>Report a map error</AttrItem>
    </Attribution>
  </MapBox>
);

export default function App() {
  return (
    <Page>
      <Global />
      <TabStrip>
        <Light $c="#fc5f57" $b="#de4a42" />
        <Light $c="#d2d2d2" $b="#c4c4c4" />
        <Light $c="#2acb42" $b="#22a935" />
        <Tab>
          <TabShape width="485" height="57" viewBox="0 0 485 57">
            <path d="M0 57L26 2q.5-2 3-2h431q2 0 3 2l22 55z" fill="#f1f1f1" stroke="#707070" strokeWidth="1" />
          </TabShape>
          <TabIcon size={29} strokeWidth={2} />
          <TabTitle>Crime Map</TabTitle>
          <TabClose size={22} strokeWidth={2} />
        </Tab>
        <NewTab width="66" height="31" viewBox="0 0 66 31"><path d="M2 0h50q2 0 3 2l10 27H10q-2 0-3-2L0 3q0-3 2-3z" fill="#b8b8b8" /></NewTab>
        <Avatar width="34" height="32" viewBox="0 0 34 32"><ellipse cx="17" cy="16" rx="16" ry="16" fill="#6a6a6a" /><circle cx="17" cy="11" r="6" fill="#9a9a9a" /><ellipse cx="17" cy="24" rx="10" ry="5" fill="#9a9a9a" /></Avatar>
      </TabStrip>
      <Toolbar>
        <NavIcons>
          <ArrowLeft size={28} color="#d8d8d8" strokeWidth={2.4} />
          <ArrowRight size={28} color="#d8d8d8" strokeWidth={2.4} />
          <RotateCw size={28} color="#707070" strokeWidth={2.6} />
          <Home />
        </NavIcons>
        <Omnibox>
          <Info size={28} color="#666" strokeWidth={2.4} />
          <Url>127.0.0.1<UrlRest>:5500/bootstrap/index.html</UrlRest></Url>
          <Star size={30} color="#6e6e6e" strokeWidth={2.6} />
        </Omnibox>
        <Extensions>
          <ExtSlot $w={57}>
            <svg width="32" height="30" viewBox="0 0 32 30"><rect x="1" y="1" width="26" height="22" rx="2" fill="#d6d6d6" stroke="#c4c4c4" /><text x="14" y="17" fontSize="13" fontWeight="700" fontFamily="Roboto" textAnchor="middle" fill="#fff">CSS</text><path d="M18 20l5 5 8-8" fill="none" stroke="#a8a8a8" strokeWidth="3.5" /></svg>
          </ExtSlot>
          <ExtSlot $w={54}>
            <svg width="40" height="42" viewBox="0 0 40 42"><path d="M0 5l14-5 14 5v16c0 6-7 10-14 14C7 31 0 27 0 21z" fill="#8f1710" /><path d="M7 10v8a3.5 3.5 0 0 0 7 0v-8M17 22V10h3a4 4 0 0 1 0 8h-3" fill="none" stroke="#fff" strokeWidth="2" /><rect x="16" y="18" width="22" height="22" rx="2" fill="#777" /><text x="27" y="36" fontSize="20" fontWeight="500" fontFamily="Roboto" textAnchor="middle" fill="#fff">7</text></svg>
          </ExtSlot>
          <ExtSlot $w={56}>
            <svg width="42" height="42" viewBox="0 0 42 42"><path d="M0 2h10a14 14 0 0 1 14 14v6h-6v-6a8 8 0 0 0-8-8H6v20H0z" fill="#444" /><rect x="12" y="18" width="28" height="22" rx="2" fill="#0cc164" /><text x="26" y="36" fontSize="20" fontWeight="500" fontFamily="Roboto" textAnchor="middle" fill="#fff">12</text></svg>
          </ExtSlot>
          <ExtSlot $w={56}>
            <svg width="32" height="32" viewBox="0 0 32 32"><defs><linearGradient id="mg" x1="0" y1="0" x2="0" y2="1"><stop offset="0" stopColor="#0cd2b4" /><stop offset="1" stopColor="#0bbad6" /></linearGradient></defs><circle cx="16" cy="16" r="16" fill="url(#mg)" /><text x="16" y="22" fontSize="20" fontFamily="Roboto" fontWeight="300" textAnchor="middle" fill="#8be5e2">m</text></svg>
          </ExtSlot>
          <ExtSlot $w={32}>
            <svg width="32" height="32" viewBox="0 0 32 32"><circle cx="16" cy="16" r="16" fill="#f6a400" /><path d="M14 7h4v12h-4zM14 21h4v4h-4z" fill="#fff" /></svg>
          </ExtSlot>
        </Extensions>
      </Toolbar>
      <BookmarkBar>
        {bookmarks.map(b => (
          <Bookmark key={b.label} $w={b.w} $ls={b.ls}>
            <BookmarkIcon $w={b.iw}>{b.icon}</BookmarkIcon>
            {b.label}
          </Bookmark>
        ))}
        <More size={22} strokeWidth={2} />
      </BookmarkBar>
      <Navbar>
        <Brand>CRIME MAP</Brand>
        <NavLink>LOOK UP STATISTICS</NavLink>
      </Navbar>
      <Band />
      <Section>
        <Heading>LOOK UP STATISTICS</Heading>
        <Divider>
          <DividerLine />
          <svg width="62" height="62" viewBox="0 -1 62 62"><path d="M30.5 0L41 18l20 2-15 17 2 20-17.500-10L13 57l2-20L0 20l20-2z" fill="#2c3e50" stroke="#2c3e50" strokeWidth="1" strokeLinejoin="round" /></svg>
          <DividerLine />
        </Divider>
        <Columns>
          <Panel>
            <Label>Enter State Name</Label>
            <SearchInput placeholder="Search.." />
            <GetData>Get data</GetData>
          </Panel>
          <MapView />
        </Columns>
      </Section>
    </Page>
  );
}
